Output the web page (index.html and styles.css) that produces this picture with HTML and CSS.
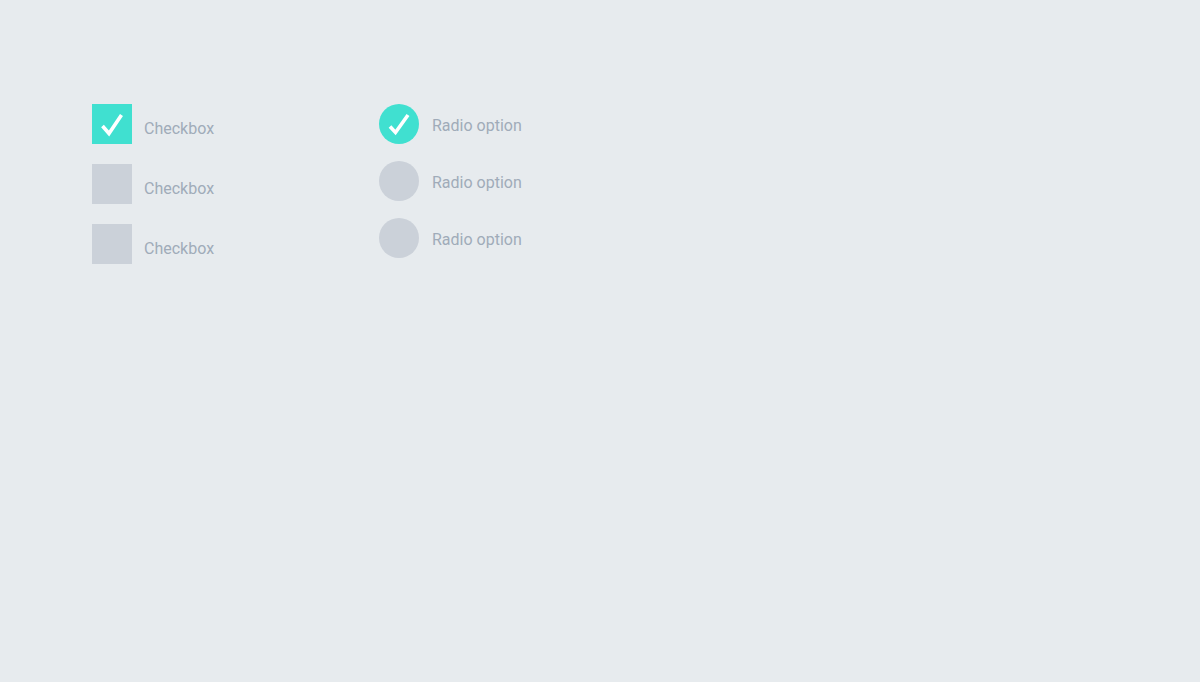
FILE: index.html
```html
<!DOCTYPE html>
<html lang="en">
<head>
    <meta charset="UTF-8">
    <title>Checkboxes &amp; Radios</title>
    <link rel="stylesheet" href="styles.css">
</head>
<body>

    <div class="controls">
        <div class="group">
            <label class="option checkbox checked">
                <span class="box">
                    <svg viewBox="0 0 40 40"><polyline points="10.5,22 17,29.5 29.5,11"/></svg>
                </span>
                <span class="label">Checkbox</span>
            </label>
            <label class="option checkbox">
                <span class="box"></span>
                <span class="label">Checkbox</span>
            </label>
            <label class="option checkbox">
                <span class="box"></span>
                <span class="label">Checkbox</span>
            </label>
        </div>

        <div class="group radios">
            <label class="option radio checked">
                <span class="box">
                    <svg viewBox="0 0 40 40"><polyline points="11,22.5 16.5,28.5 29,11"/></svg>
                </span>
                <span class="label">Radio option</span>
            </label>
            <label class="option radio">
                <span class="box"></span>
                <span class="label">Radio option</span>
            </label>
            <label class="option radio">
                <span class="box"></span>
                <span class="label">Radio option</span>
            </label>
        </div>
    </div>

</body>
</html>
```

FILE: styles.css
```css
body {
    font-family: Roboto, "Liberation Sans", Arial, sans-serif;
    background-color: #e7ebee;
    margin: 0;
    min-height: 100vh;
}
.controls {
    display: flex;
    padding: 104px 0 0 92px;
}
.group {
    width: 287px;
    display: flex;
    flex-direction: column;
    gap: 20px;
}
.group.radios {
    gap: 17px;
}
.option {
    display: flex;
    align-items: center;
    cursor: pointer;
}
.box {
    width: 40px;
    height: 40px;
    flex-shrink: 0;
    background-color: #cbd1d9;
    display: flex;
}
.box svg {
    width: 40px;
    height: 40px;
}
.box polyline {
    fill: none;
    stroke: #fff;
    stroke-width: 3.6;
    stroke-linecap: butt;
    stroke-linejoin: miter;
}
.checked .box {
    background-color: #40e0d0;
}
.radio .box {
    border-radius: 50%;
}
.label {
    font-size: 16px;
    color: #a0abb9;
}
.checkbox .label {
    margin-left: 12px;
    padding-top: 8px;
}
.radio .label {
    margin-left: 13px;
    padding-top: 2px;
}
```
